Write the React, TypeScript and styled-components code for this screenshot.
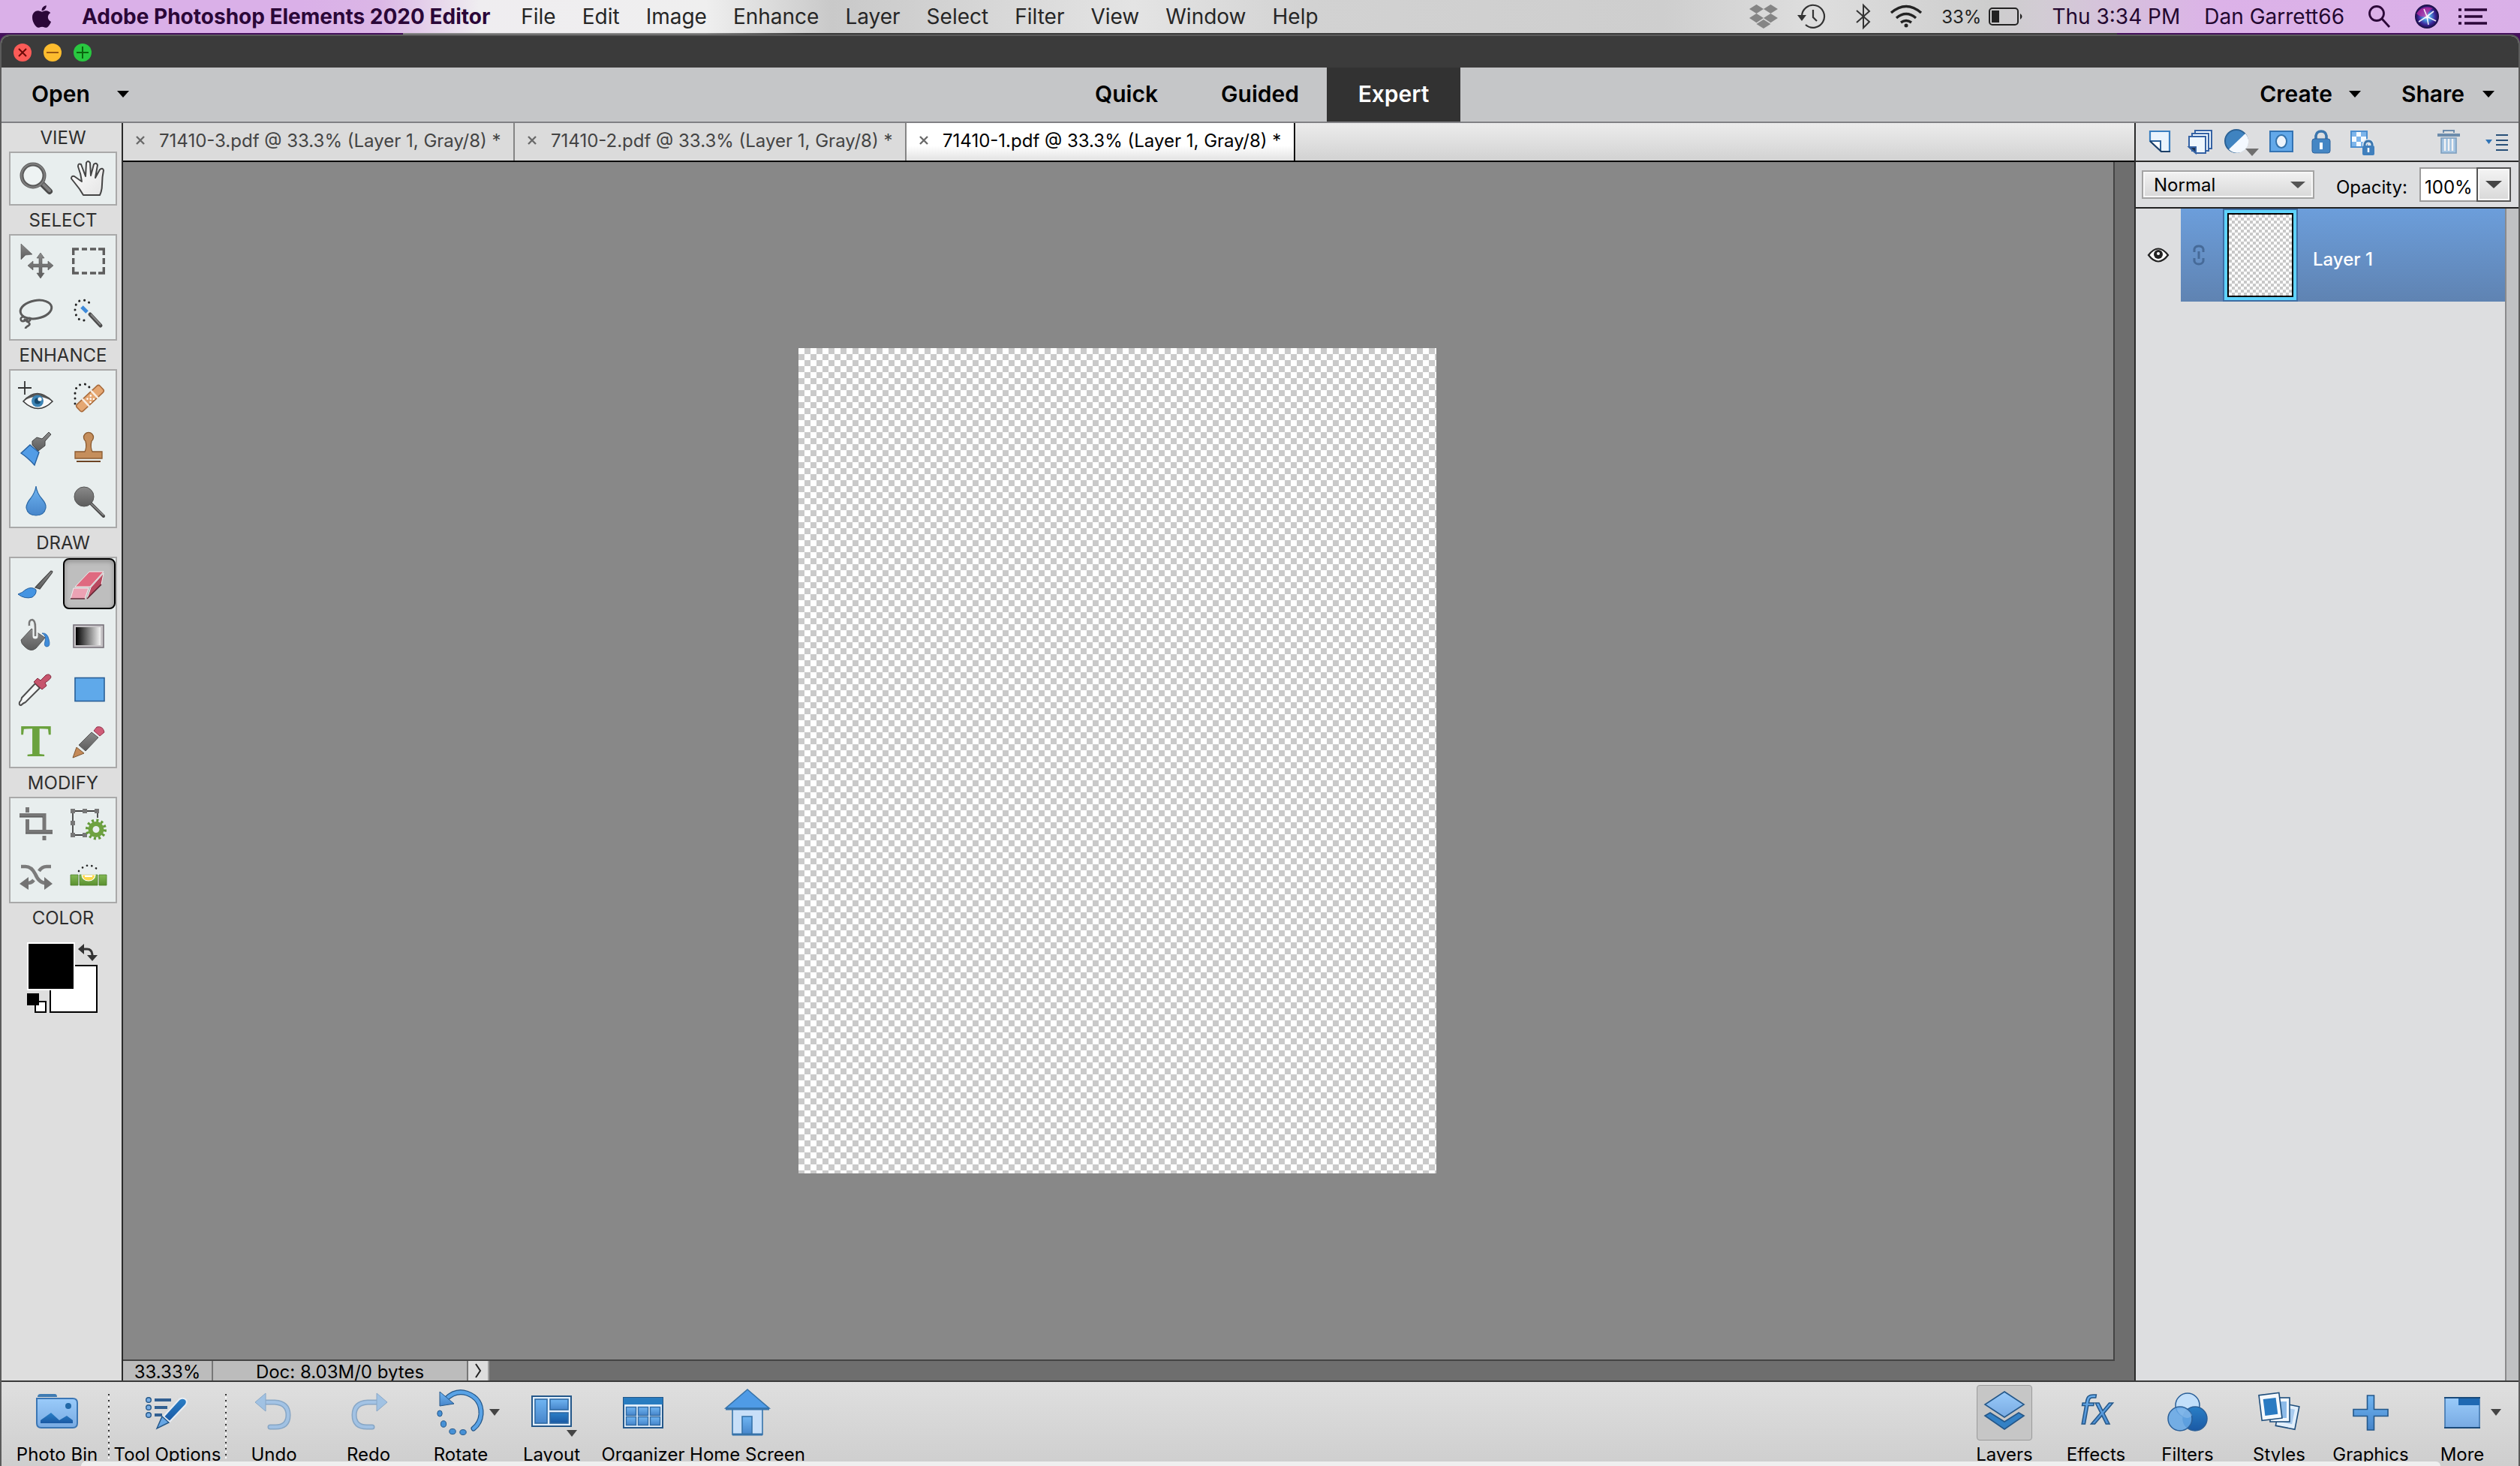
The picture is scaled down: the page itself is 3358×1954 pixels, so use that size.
import React from 'react';
import styled, { createGlobalStyle } from 'styled-components';
import { FaApple, FaDropbox } from 'react-icons/fa';

const GlobalStyle = createGlobalStyle`
  * { box-sizing: border-box; }
  body { margin: 0; overflow: hidden; font-family: Inter, Roboto, sans-serif; font-size: 24px; color: #000; }
  button, input, select { font: inherit; color: inherit; margin: 0; padding: 0; border: 0; background: none; border-radius: 0; }
  svg { display: block; flex: none; overflow: visible; }
`;

const Screen = styled.div`
  display: flex;
  flex-direction: column;
  height: 100vh;
  background: linear-gradient(90deg, #45105c 0 16%, #858585 16% 28%, #3c3c3c 32% 84%, #45105c 84%);
`;

/* ---------- System menu bar ---------- */

const MenuBar = styled.header`
  flex: none;
  display: flex;
  align-items: center;
  height: 44px;
  padding: 0 44px 0 42px;
  font-size: 28px;
  color: #202020;
  background: linear-gradient(90deg, #dab0e8 0 12%, #dbb6e6 15%, #efedf0 19%, #efefef 28%, #c9c9c9 33%, #cfcfcf 36%, #e4e4e4 45%, #d2d2d2 52%, #cecece 66%, #dedede 72%, #cdcdcd 79%, #d2ccd4 81%, #dcb2e8 88%, #dab0e8);
`;

const AppleMark = styled(FaApple)`
  width: 27px;
  height: 34px;
  color: #2b0738;
`;

const MenuNav = styled.nav`
  display: flex;
  gap: 35px;
  margin-left: 40px;
`;

const MenuItem = styled.button<{ $app?: boolean }>`
  margin-right: ${(p) => (p.$app ? 6 : 0)}px;
  font-weight: ${(p) => (p.$app ? 700 : 400)};
  color: ${(p) => (p.$app ? '#2b0738' : '#262626')};
  white-space: nowrap;
`;

const MenuStatus = styled.div`
  display: flex;
  align-items: center;
  gap: 32px;
  margin-left: auto;
  color: #230830;
  white-space: nowrap;
`;

const StatusIcons = styled.div`
  display: flex;
  align-items: center;
  gap: 26px;
`;

const Battery = styled.span`
  display: flex;
  align-items: center;
  gap: 10px;
  margin-right: 6px;
  font-size: 24px;
  color: #222;
`;

/* ---------- Window chrome ---------- */

const Window = styled.div`
  flex: 1;
  min-height: 0;
  display: flex;
  flex-direction: column;
  margin-top: 2px;
  border: 2px solid #5b5b5b;
  border-bottom: 0;
  border-radius: 12px 12px 0 0;
  overflow: hidden;
  background: #dedede;
`;

const TitleBar = styled.div`
  flex: none;
  display: flex;
  align-items: center;
  gap: 16px;
  height: 42px;
  padding: 2px 16px 0;
  background: #3b3b3b;
`;

const Light = styled.button<{ $color: string }>`
  display: grid;
  place-items: center;
  width: 24px;
  height: 24px;
  border-radius: 50%;
  background: ${(p) => p.$color};
`;

const ModeBar = styled.div`
  flex: none;
  display: grid;
  grid-template-columns: 1fr auto 1fr;
  height: 74px;
  border-bottom: 2px solid #808084;
  background: #c5c6c8;
  font-size: 30px;
  font-weight: 600;
`;

const ModeSide = styled.div<{ $end?: boolean }>`
  display: flex;
  align-items: center;
  gap: 54px;
  padding: 0 32px 2px 40px;
  justify-content: ${(p) => (p.$end ? 'flex-end' : 'flex-start')};
`;

const DropButton = styled.button<{ $gap: number }>`
  display: flex;
  align-items: center;
  gap: ${(p) => p.$gap}px;
`;

const Modes = styled.nav`
  display: flex;
`;

const Mode = styled.button<{ $active?: boolean }>`
  min-width: 178px;
  padding-bottom: 2px;
  color: ${(p) => (p.$active ? '#fff' : '#000')};
  background: ${(p) => (p.$active ? '#323232' : 'transparent')};
`;

const Body = styled.div`
  flex: 1;
  min-height: 0;
  display: flex;
`;

/* ---------- Tool column ---------- */

const Tools = styled.aside`
  flex: none;
  width: 162px;
  padding: 0 6px 0 10px;
  border-right: 2px solid #2a2a2a;
  background: #dedede;
`;

const ToolHeading = styled.h2`
  margin: 0;
  height: 38px;
  font-size: 24px;
  line-height: 40px;
  font-weight: 400;
  text-align: center;
  color: #2e2e2e;
`;

const ToolGroup = styled.div`
  display: grid;
  grid-template-columns: 1fr 1fr;
  grid-auto-rows: 68px;
  row-gap: 2px;
  border: 2px solid #a9a9a9;
  background: #e8eeee;
`;

const Tool = styled.button<{ $active?: boolean }>`
  display: grid;
  place-items: center;
  border-radius: 8px;
  border: ${(p) => (p.$active ? '2px solid #000' : '0')};
  background: ${(p) => (p.$active ? '#bebebe' : 'transparent')};
  box-shadow: ${(p) => (p.$active ? 'inset 0 2px 6px #8c8c8c' : 'none')};
`;

const Swatches = styled.div`
  display: grid;
  justify-content: center;
  margin-top: 14px;
`;

/* ---------- Document area ---------- */

const Documents = styled.main`
  flex: 1;
  min-width: 0;
  display: flex;
  flex-direction: column;
  background: #6e6e6e;
`;

const TabBar = styled.div`
  flex: none;
  display: flex;
  height: 52px;
  border-bottom: 2px solid #000;
  background: linear-gradient(#ececec, #d2d2d2);
`;

const Tab = styled.div<{ $active?: boolean }>`
  display: flex;
  align-items: center;
  gap: 18px;
  width: ${(p) => (p.$active ? 518 : 522)}px;
  padding: 0 16px 4px;
  border-right: 2px solid ${(p) => (p.$active ? '#111' : '#858585')};
  color: ${(p) => (p.$active ? '#000' : '#444')};
  background: ${(p) => (p.$active ? 'linear-gradient(#fff 60%, #e2e2e2)' : '#dbdbdb')};
  white-space: nowrap;
`;

const Viewport = styled.div`
  flex: 1;
  min-height: 0;
  display: flex;
  align-items: center;
  justify-content: center;
  margin-right: 26px;
  border-right: 2px solid #444;
  border-bottom: 2px solid #444;
  background: #888;
  padding-right: 2px;
`;

const Paper = styled.div`
  width: 850px;
  height: 1100px;
  background: repeating-conic-gradient(#cacaca 0 25%, #fff 0 50%) 0 0 / 16px 16px;
`;

const StatusBar = styled.div`
  flex: none;
  display: flex;
  height: 26px;
  line-height: 30px;
`;

const StatusCell = styled.div<{ $width: number }>`
  width: ${(p) => p.$width}px;
  text-align: center;
  border-right: 2px solid #777;
  background: #bcbcbc;
`;

const StatusMore = styled.button`
  display: grid;
  place-items: center;
  width: 28px;
  border-right: 2px solid #a0a0a0;
  background: #dedede;
`;

/* ---------- Layers panel ---------- */

const Panel = styled.aside`
  flex: none;
  display: flex;
  flex-direction: column;
  width: 512px;
  border-left: 2px solid #2a2a2a;
  background: #dddee0;
`;

const PanelActions = styled.div`
  flex: none;
  display: flex;
  align-items: center;
  height: 52px;
  padding: 2px 16px 2px 18px;
  border-bottom: 2px solid #2b2b2b;
`;

const ActionButton = styled.button<{ $gap: number }>`
  margin-right: ${(p) => p.$gap}px;
`;

const BlendRow = styled.div`
  flex: none;
  display: flex;
  align-items: center;
  height: 62px;
  padding: 0 10px 0 8px;
  border-bottom: 2px solid #222;
`;

const SelectBox = styled.div`
  position: relative;
  width: 230px;
`;

const BlendSelect = styled.select`
  appearance: none;
  width: 100%;
  height: 38px;
  padding: 0 0 0 14px;
  border: 2px solid #a4a4a4;
  box-shadow: inset 0 0 0 2px #f8f8f8;
  background: linear-gradient(#f2f2f2, #d8d8d8);
`;

const SelectArrow = styled.span`
  position: absolute;
  right: 12px;
  top: 15px;
  pointer-events: none;
`;

const OpacityLabel = styled.label`
  margin: 6px 16px 0 auto;
`;

const OpacityInput = styled.input`
  width: 76px;
  height: 46px;
  padding: 6px 0 0 5px;
  border: 2px solid #9b9b9b;
  border-right: 0;
  background: #fff;
`;

const OpacityDrop = styled.button`
  display: grid;
  place-items: center;
  width: 46px;
  height: 46px;
  border: 2px solid #555;
  box-shadow: inset 0 0 0 2px #fafafa;
  background: linear-gradient(#f4f4f4, #d8d8d8);
`;

const LayerArea = styled.div`
  flex: 1;
  display: flex;
  flex-direction: column;
  background: #c0c1c3;
`;

const LayerList = styled.div`
  flex: 1;
  margin-right: 16px;
  border-right: 2px solid #8a8a8c;
  background: #dddee0;
`;

const LayerRow = styled.div`
  display: flex;
  height: 124px;
`;

const Visibility = styled.button`
  display: grid;
  place-items: center;
  width: 60px;
`;

const LayerBody = styled.div`
  flex: 1;
  display: flex;
  align-items: center;
  padding-left: 16px;
  color: #fff;
  font-weight: 500;
  background: linear-gradient(#6c9edb, #5f83b2);
`;

const LayerName = styled.span`
  padding-top: 10px;
`;

const Thumb = styled.div`
  width: 100px;
  height: 124px;
  margin: 0 20px 0 24px;
  padding: 2px;
  background: #3f6da4;
`;

const ThumbInner = styled.div`
  height: 100%;
  border: 4px solid #5fd3fb;
  padding: 2px;
  background: #000;
`;

const ThumbPaper = styled.div`
  height: 100%;
  background: repeating-conic-gradient(#c8c8c8 0 25%, #fff 0 50%) 0 0 / 8px 8px;
`;

/* ---------- Bottom task bar ---------- */

const TaskBar = styled.footer`
  flex: none;
  position: relative;
  display: flex;
  height: 114px;
  padding: 0 14px 0 6px;
  border-top: 2px solid #3a3a3a;
  background: linear-gradient(#dfdfdf, #cecece);
`;

const Task = styled.button<{ $width: number }>`
  display: flex;
  flex-direction: column;
  align-items: center;
  width: ${(p) => p.$width}px;
  padding-top: 4px;
  white-space: nowrap;
  line-height: 30px;
`;

const TaskIcon = styled.span<{ $active?: boolean }>`
  position: relative;
  display: grid;
  place-items: center;
  width: 74px;
  height: 74px;
  margin-bottom: 4px;
  border: 1px solid ${(p) => (p.$active ? '#9a9a9a' : 'transparent')};
  border-radius: 4px;
  background: ${(p) => (p.$active ? '#c6c6c6' : 'transparent')};
`;

const Flyout = styled.span<{ $low?: boolean }>`
  position: absolute;
  left: ${(p) => (p.$low ? 56 : 74)}px;
  top: ${(p) => (p.$low ? 59 : 31)}px;
`;

const Divider = styled.span`
  width: 2px;
  height: 86px;
  margin-top: 16px;
  background: repeating-linear-gradient(#333 0 2px, transparent 2px 4px, #fff 4px 6px, transparent 6px 8px);
`;

const Spacer = styled.span`
  flex: 1;
`;

const DockEdge = styled.div`
  position: absolute;
  left: 106px;
  right: 104px;
  bottom: 0;
  height: 6px;
  border-radius: 6px 6px 0 0;
  background: #efefef;
`;

/* ---------- Drawings ---------- */

const Caret = ({ w = 16, h = 9, fill = '#000' }: { w?: number; h?: number; fill?: string }) => (
  <svg width={w} height={h} viewBox="0 0 16 9" preserveAspectRatio="none" aria-hidden="true">
    <path d="M0 0H16L8 9Z" fill={fill} />
  </svg>
);

const HiddenSvg = styled.svg`
  position: absolute;
`;

const Defs = () => (
  <HiddenSvg width="0" height="0" aria-hidden="true">
    <defs>
      <linearGradient id="blue" x1="0" y1="0" x2="0" y2="1"><stop offset="0" stopColor="#70b5f2" /><stop offset="1" stopColor="#4685ca" /></linearGradient>
      <linearGradient id="pale" x1="0" y1="0" x2="0" y2="1"><stop offset="0" stopColor="#9acbfa" /><stop offset="1" stopColor="#78aae2" /></linearGradient>
      <linearGradient id="deep" x1="0" y1="0" x2="0" y2="1"><stop offset="0" stopColor="#2a7fc6" /><stop offset="1" stopColor="#1a59a4" /></linearGradient>
      <linearGradient id="gray" x1="0" y1="0" x2="0" y2="1"><stop offset="0" stopColor="#8a8a8a" /><stop offset="1" stopColor="#5c5c5c" /></linearGradient>
      <linearGradient id="green" x1="0" y1="0" x2="0" y2="1"><stop offset="0" stopColor="#83b954" /><stop offset="1" stopColor="#5a9030" /></linearGradient>
      <linearGradient id="ramp"><stop offset="0" stopColor="#000" /><stop offset="1" stopColor="#f4f4f4" /></linearGradient>
      <linearGradient id="hand" x1="0" y1="0" x2="1" y2="1"><stop offset="0" stopColor="#fff" /><stop offset="1" stopColor="#e4e4e4" /></linearGradient>
      <radialGradient id="siri" cx=".5" cy=".5" r=".5"><stop offset="0" stopColor="#fff" /><stop offset=".3" stopColor="#4a9be0" /><stop offset=".7" stopColor="#3c2398" /><stop offset="1" stopColor="#140b3a" /></radialGradient>
    </defs>
  </HiddenSvg>
);

const toolArt: Record<string, React.ReactNode> = {
  Zoom: (
    <g fill="none"><path d="M30 30L41 41" stroke="#4b4b4b" strokeWidth="8" strokeLinecap="round" /><path d="M31 30L41 40" stroke="#808080" strokeWidth="4" strokeLinecap="round" />
      <circle cx="19" cy="20" r="15" fill="#eef3f3" stroke="#5a5a5a" strokeWidth="5" /><circle cx="19" cy="20" r="15.5" stroke="#808080" strokeWidth="2" /></g>
  ),
  Hand: (
    <path d="M16 46L11 38Q4 29 0 24Q0 20 4 21L14 28Q13 18 9 8Q9 3 13 5L19 21L20 3Q22-1 25 3L26 20L30 5Q33 2 35 6L32 23L38 12Q42 9 43 13Q41 22 41 32Q41 40 38 46Z" fill="url(#hand)" stroke="#454545" strokeWidth="2" strokeLinejoin="round" />
  ),
  Move: (
    <g fill="url(#gray)" stroke="#555" strokeWidth=".6"><path d="M3 1L18 15L9 16L3 22Z" />
      <path d="M29 13L34 20H31V28H39V24L46 30L39 36V32H31V40H34L29 47L24 40H27V32H19V36L12 30L19 24V28H27V20H24Z" /></g>
  ),
  Marquee: (
    <g fill="none" stroke="#5d5d5d" strokeWidth="3.4"><path d="M2.700 16V8H10M36 8H43.300V16M43.300 32V40H36M10 40H2.700V32M14 8H21M25 8H33M14 40H21M25 40H33M2.700 20V28M43.300 20V28" /></g>
  ),
  Lasso: (
    <g fill="none" stroke="#5b5b5b" strokeWidth="3"><ellipse cx="23" cy="18.500" rx="21" ry="12" transform="rotate(-10 23 18.5)" /><path d="M7 28Q1 29 3 33Q6 36 12 31Q17 28 15 33Q12 36 7 31M10 34Q17 37 13 40Q9 42 9 44" strokeWidth="2.600" /></g>
  ),
  'Quick Selection': (
    <g><path d="M17 33Q7 34 5 20Q5 7 15 6Q23 6 27 14" fill="none" stroke="#222" strokeWidth="3" strokeLinecap="round" strokeDasharray=".1 6.800" />
      <path d="M14 15L21 22" stroke="#3d8ada" strokeWidth="5" /><path d="M25 25L39 40" stroke="#4a4a4a" strokeWidth="5" strokeLinecap="round" /><path d="M26 25L39 39" stroke="#858585" strokeWidth="2" /></g>
  ),
  'Eye Correction': (
    <g><path d="M-1 13H17M8 4V22" stroke="#333" strokeWidth="1.800" /><path d="M6 31Q24 10 45 31Q26 50 6 31Z" fill="#f8f8f8" stroke="#3b3b3b" strokeWidth="1.600" /><path d="M6 31Q24 10 45 31Q24 18 6 31Z" fill="#555" />
      <circle cx="25" cy="30.500" r="8" fill="#3c83b4" /><circle cx="25" cy="30.500" r="4" fill="#16486c" /><circle cx="28" cy="28" r="2.600" fill="#fff" /></g>
  ),
  'Spot Healing': (
    <g><path d="M5 34V18Q7 8 17 8Q22 8 25 14" fill="none" stroke="#222" strokeWidth="3" strokeLinecap="round" strokeDasharray=".1 6.800" />
      <g transform="rotate(-43 25 27)"><rect x="4" y="21" width="42" height="12" rx="3" fill="#e5a772" stroke="#a86b3c" strokeWidth="1.500" /><path d="M17 20V34M33 20V34" stroke="#f7ece2" strokeWidth="2.500" /><g fill="#fff"><circle cx="22" cy="25" r="1.300" /><circle cx="25" cy="28" r="1.300" /><circle cx="28" cy="25" r="1.300" /><circle cx="22" cy="31" r="1.300" /><circle cx="28" cy="31" r="1.300" /></g></g></g>
  ),
  'Smart Brush': (
    <g><path d="M40 2L43 5L35 14L35 20L26 27L18 19V14L24 9L31 11Z" fill="url(#gray)" stroke="#444" strokeWidth="1" /><path d="M3 30L15 19L27 29L21 46Q12 36 3 30Z" fill="#529ce6" stroke="#245f9f" strokeWidth="1.400" /></g>
  ),
  'Clone Stamp': (
    <g fill="#c58e5c" stroke="#8a5a30" strokeWidth="1.300"><path d="M5 37V28H18Q21 22 19 14A6.500 6.500 0 1 1 27 14Q25 22 28 28H41V37Z" /><path d="M7 41H39" strokeWidth="2" stroke="#6d4423" /></g>
  ),
  Blur: <path d="M23 4Q24 13 31 21Q37 28 36 33Q34 43 23 43Q12 43 10 33Q10 27 16 20Q22 12 23 4Z" fill="url(#blue)" stroke="#2a68a6" strokeWidth="1.200" />,
  Sponge: (
    <g><path d="M26 27L43 44" stroke="#484848" strokeWidth="4" strokeLinecap="round" /><path d="M26 27L43 43" stroke="#909090" strokeWidth="1.500" /><circle cx="17" cy="18" r="13" fill="url(#gray)" stroke="#555" /></g>
  ),
  Brush: (
    <g><path d="M43 7Q46 7 44 10L28 31L22 29Q32 18 43 7Z" fill="url(#gray)" stroke="#444" strokeWidth="1.200" /><path d="M-1 38Q5 36 9 32Q17 27 23 32Q24 38 18 42Q8 45-1 38Z" fill="#4494e2" stroke="#235d9c" strokeWidth="1" /></g>
  ),
  Eraser: (
    <g stroke="#eee" strokeWidth="1"><path d="M5 28L24 8H43L25 28Z" fill="#df6a80" /><path d="M3 30H23L18 44H-1Z" fill="#eca2b4" /><path d="M26 29L43 10L40 25L21 44Z" fill="#b84a5f" /><path d="M-1 44H18M21 44L40 25" stroke="#5b2230" strokeWidth="1.500" /></g>
  ),
  'Paint Bucket': (
    <g><path d="M3 29L17 14L35 26L23 40Q16 46 8 38Q3 34 3 29Z" fill="url(#gray)" stroke="#555" strokeWidth="1" /><path d="M22 12V24" fill="none" stroke="#eef2f2" strokeWidth="7" strokeLinecap="round" /><path d="M14 10Q13 2 18 2Q22 3 22 12V24" fill="none" stroke="#777" strokeWidth="2.600" /><path d="M31 20Q38 19 40 28Q43 38 37 38Q33 37 35 31Q37 23 31 20Z" fill="#3f8cda" stroke="#2461a3" strokeWidth=".8" /></g>
  ),
  Gradient: (
    <g><rect x="3" y="9" width="40" height="30" fill="#c7c4c7" stroke="#77727a" strokeWidth="1.600" /><rect x="6" y="12" width="33" height="24" fill="url(#ramp)" /></g>
  ),
  'Color Picker': (
    <g><path d="M22 17L28 23L9 42Q6 43 3 46Q0 46 1 42Q4 39 4 36Z" fill="#f3f6f6" stroke="#4d4d4d" strokeWidth="2" /><path d="M20 15L25 10L29 13L36 6Q41 3 43 8Q43 11 35 16L37 20L31 25Z" fill="#c6546c" stroke="#83283d" strokeWidth="1" /></g>
  ),
  Shape: <rect x="5" y="9.500" width="39" height="31" fill="#5fa9ea" stroke="#285f98" strokeWidth="1.600" />,
  Type: <text x="23" y="44" textAnchor="middle" fontFamily="Liberation Serif, serif" fontWeight="700" fontSize="62" fill="#6ba23e">T</text>,
  Pencil: (
    <g><path d="M2 46L7 32L17 40Z" fill="#c48a58" stroke="#7c5532" strokeWidth="1" /><path d="M10 29L27 12L36 19L19 37Z" fill="url(#gray)" stroke="#555" /><path d="M30 10L34 5Q42 3 44 12L38 17Z" fill="#cf5d78" stroke="#93324a" strokeWidth="1" /></g>
  ),
  Crop: (
    <g fill="none" stroke="#777" strokeWidth="5"><path d="M1 12.500H34V32" /><path d="M11.500 2V9M11.500 18V34.500H45M34 40V46" /><path d="M1 15H32M9 37H45" stroke="#444" strokeWidth="1" /></g>
  ),
  Recompose: (
    <g><path d="M2 7H35V16M2 7V39H20" fill="none" stroke="#444" strokeWidth="1.800" /><g fill="#777"><path d="M-1 4H5V10H-1ZM15 4H21V10H15ZM31 4H37V10H31ZM-1 20H5V26H-1ZM-1 36H5V42H-1ZM15 36H21V42H15Z" /></g>
      <circle cx="33" cy="31.500" r="12" fill="none" stroke="#639a38" strokeWidth="4" strokeDasharray="3 3.280" /><circle cx="33" cy="31.500" r="7.500" fill="#e8eeee" stroke="#6ea240" strokeWidth="6" /></g>
  ),
  'Content-Aware Move': (
    <g fill="none" stroke="#7b7b7b" strokeWidth="4.600"><path d="M3 11H9Q17 11 22 21Q27 33 36 33" /><path d="M43 11H37Q31 11 27 17M20 29Q17 33 12 33" /><path d="M34 25L45 34L34 42ZM13 25L1 34L13 42Z" fill="#737373" stroke="none" /></g>
  ),
  Straighten: (
    <g><path d="M10 17Q23 2 37 17" fill="none" stroke="#222" strokeWidth="2.600" strokeLinecap="round" strokeDasharray=".1 6.500" /><path d="M-1 22H9V36H-1ZM11 22H35V36H11ZM37 22H47V36H37Z" fill="url(#green)" stroke="#4b7d28" strokeWidth=".8" /><path d="M14 22H32Q31 30 23 30Q15 30 14 22Z" fill="#fbd84b" stroke="#fff" strokeWidth="1.200" /><path d="M18 24H28" stroke="#fff" strokeWidth="2" /></g>
  ),
};

const groups: [string, string[]][] = [
  ['VIEW', ['Zoom', 'Hand']],
  ['SELECT', ['Move', 'Marquee', 'Lasso', 'Quick Selection']],
  ['ENHANCE', ['Eye Correction', 'Spot Healing', 'Smart Brush', 'Clone Stamp', 'Blur', 'Sponge']],
  ['DRAW', ['Brush', 'Eraser', 'Paint Bucket', 'Gradient', 'Color Picker', 'Shape', 'Type', 'Pencil']],
  ['MODIFY', ['Crop', 'Recompose', 'Content-Aware Move', 'Straighten']],
];

const edge = '#245789';

const taskArt: Record<string, React.ReactNode> = {
  'Photo Bin': (
    <g><path d="M6 11Q6 7 10 7H29Q32 7 32 11Z" fill="#3f7bb2" /><path d="M5 13H53Q59 13 59 19V46Q59 52 53 52H11Q5 52 5 46Z" fill="url(#pale)" stroke="#3b76b4" strokeWidth="2" /><path d="M10 46V42L24 32L35 42L45 36L53 42V46Z" fill="url(#deep)" /><circle cx="47" cy="23" r="4" fill="#2269a8" /></g>
  ),
  'Tool Options': (
    <g><g fill="#78aee5" stroke={edge} strokeWidth="1.400"><circle cx="7" cy="15" r="3.300" /><circle cx="7" cy="25" r="3.300" /><circle cx="7" cy="35" r="3.300" /></g><path d="M15 15H37M15 25H32M15 35H25" stroke="#315f91" strokeWidth="4" /><path d="M48 14Q54 11 57 15Q59 18 56 22L35 44L27 37Z" fill="url(#deep)" stroke="#e9eef4" strokeWidth="2" /><path d="M25 37L34 45L18 53Z" fill="#67a6e4" stroke={edge} strokeWidth="1.400" /></g>
  ),
  Undo: <g opacity=".55"><path d="M20 18H33Q51 19 51 35Q51 51 34 51H27" fill="none" stroke="#467fb8" strokeWidth="7" strokeLinecap="round" /><path d="M20 18H33Q51 19 51 35Q51 51 34 51H27" fill="none" stroke="#76b1ee" strokeWidth="4" strokeLinecap="round" /><path d="M7 18L21 6V30Z" fill="#72aeea" stroke="#467fb8" /></g>,
  Redo: <g opacity=".55"><path d="M44 18H31Q13 19 13 35Q13 51 30 51H37" fill="none" stroke="#467fb8" strokeWidth="7" strokeLinecap="round" /><path d="M44 18H31Q13 19 13 35Q13 51 30 51H37" fill="none" stroke="#76b1ee" strokeWidth="4" strokeLinecap="round" /><path d="M57 18L43 6V30Z" fill="#72aeea" stroke="#467fb8" /></g>,
  Rotate: (
    <g><path d="M12 14Q25 1 40 6Q60 13 59 34Q58 46 49 53" fill="none" stroke={edge} strokeWidth="7" strokeLinecap="round" /><path d="M12 14Q25 1 40 6Q60 13 59 34Q58 46 49 53" fill="none" stroke="#5aa3e6" strokeWidth="4.500" strokeLinecap="round" /><path d="M4 4V23L23 20Z" fill="url(#blue)" stroke={edge} /><g fill="#4791d6" stroke={edge}><ellipse cx="4" cy="33" rx="3.200" ry="4" /><ellipse cx="9" cy="47" rx="3.600" ry="4.200" /><ellipse cx="21" cy="57" rx="4.200" ry="3.600" /><ellipse cx="35" cy="58" rx="4.200" ry="3.400" /></g></g>
  ),
  Layout: (
    <g stroke="#2f6aa4" strokeWidth="1.600"><rect x="6" y="10" width="52" height="40" fill="#e2effb" stroke={edge} strokeWidth="2" /><rect x="10" y="14" width="16" height="32" fill="url(#blue)" /><rect x="30" y="14" width="24" height="14" fill="url(#blue)" /><rect x="30" y="32" width="24" height="14" fill="url(#deep)" /></g>
  ),
  Organizer: (
    <g stroke="#2f6aa4" strokeWidth="1.400"><rect x="6" y="12" width="52" height="40" fill="#e2effb" stroke={edge} strokeWidth="2" /><rect x="6" y="12" width="52" height="9" fill="#287cc0" stroke="none" />{[9.5, 25.5, 41.5].map((x) => [24.5, 37.5].map((y) => <rect key={x + '-' + y} x={x} y={y} width="13" height="11" fill="url(#blue)" />))}</g>
  ),
  'Home Screen': (
    <g stroke="#3673aa" strokeWidth="1.600"><rect x="12" y="27" width="40" height="34" fill="#c8dff8" /><path d="M32 1L61 26H3Z" fill="#4f9be6" /><rect x="25" y="37" width="13" height="24" fill="url(#blue)" /><path d="M3 27H61M12 61H52" strokeWidth="3" /></g>
  ),
  Layers: <g stroke={edge} strokeWidth="1.600"><path d="M32 4L58 21L32 38L6 21Z" fill="url(#pale)" /><path d="M6 36L13 32L32 44L51 32L58 36L32 54Z" fill="#3481c5" /></g>,
  Effects: <text x="32" y="47" textAnchor="middle" fontFamily="DejaVu Sans Condensed, Open Sans, sans-serif" fontStyle="italic" fontSize="52" fill="url(#blue)" stroke={edge} strokeWidth="1.500">fx</text>,
  Filters: (
    <g stroke="#2a5f98" strokeWidth="1.500"><circle cx="32" cy="22" r="16" fill="#c2dffa" /><circle cx="42" cy="40" r="16" fill="url(#deep)" /><circle cx="22" cy="40" r="16" fill="#65a7e6" fillOpacity=".88" /><path d="M18 28Q31 23 38 35Q36 39 31 39Q21 37 18 28Z" fill="#8bbbe9" stroke="none" opacity=".6" /></g>
  ),
  Styles: (
    <g stroke="#1f4e7c" strokeWidth="1.600"><rect x="30" y="21" width="26" height="31" fill="#e2effb" transform="rotate(11 43 37)" /><rect x="34" y="26" width="17" height="20" fill="#a8cbef" stroke="none" transform="rotate(11 43 37)" /><rect x="20" y="12" width="26" height="32" fill="#f2f8fe" /><rect x="25" y="17" width="17" height="22" fill="#8dbbe9" stroke="none" /><rect x="7" y="7" width="27" height="34" fill="#f5f9fd" transform="rotate(-7 20 24)" /><rect x="12" y="13" width="17" height="22" fill="#297ac2" stroke="none" transform="rotate(-7 20 24)" /></g>
  ),
  Graphics: <path d="M27.500 9H36.500V27.500H55V36.500H36.500V55H27.500V36.500H9V27.500H27.500Z" fill="url(#blue)" stroke={edge} strokeWidth="1.600" />,
  More: <g><rect x="9" y="12" width="46" height="40" fill="url(#pale)" stroke="#3f76b0" strokeWidth="1.600" /><path d="M27 12H55V22H27Z" fill="#1f69b3" /><path d="M8 12H56M8 52H56" stroke="#1b4a7a" strokeWidth="2" /></g>,
};

const TaskItem = ({ name, width, active, flyout }: { name: string; width: number; active?: boolean; flyout?: 'side' | 'low' }) => (
  <Task $width={width}>
    <TaskIcon $active={active}>
      <svg width="64" height="64" viewBox="0 0 64 64" aria-hidden="true">{taskArt[name]}</svg>
      {flyout && <Flyout $low={flyout === 'low'}><Caret w={14} fill="#444" /></Flyout>}
    </TaskIcon>
    {name}
  </Task>
);

const Art = ({ w, h = 34, children }: { w: number; h?: number; children: React.ReactNode }) => (
  <svg width={w} height={h} viewBox={`0 0 ${w} ${h}`} aria-hidden="true">{children}</svg>
);

const panelActions: [string, number, number, React.ReactNode][] = [
  ['New layer', 28, 24, <g key="n"><path d="M1 3H27V30H16L1 16Z" fill="#eaf4fd" stroke="#3a7fc0" strokeWidth="2.200" /><path d="M1 16H15V30" fill="#fff" stroke="#2b6099" strokeWidth="2" /><path d="M1 16L16 30H28" fill="none" stroke="#1d3e66" strokeWidth="2" /></g>],
  ['New group', 32, 16, <g key="g" fill="#eef6fe" stroke="#3562a4" strokeWidth="2"><path d="M9 2H31V26H9Z" /><path d="M5 6H27V29H5Z" /><path d="M1 10H23V32H10L1 24Z" /><path d="M1 24H10V32Z" fill="#1d3454" /></g>],
  ['Adjustment layer', 46, 14, <g key="a"><circle cx="16" cy="16" r="15" fill="#3f83c0" stroke="#2c6295" strokeWidth="2" /><path d="M28 6A15 15 0 0 1 6 27Z" fill="#f4f9ff" /><path d="M28 26H46L37 36Z" fill="#6f6f6f" /></g>],
  ['Layer mask', 32, 24, <g key="m"><rect x="1" y="3" width="30" height="27" fill="#63a9ea" stroke="#3373b3" strokeWidth="2" /><ellipse cx="16" cy="16.500" rx="7" ry="8.500" fill="#eef4fb" stroke="#3573ac" strokeWidth="2" /></g>],
  ['Lock all', 26, 26, <g key="l"><path d="M6 14V9Q7 3 13 3Q19 3 20 9V14" fill="none" stroke="#3a75ad" strokeWidth="3.600" /><rect x="1" y="13" width="24" height="19" rx="3" fill="#4586c4" stroke="#2d629b" /><path d="M13 18V27" stroke="#fff" strokeWidth="4" /></g>],
  ['Lock transparency', 32, 84, <g key="t"><rect x="1" y="3" width="21" height="21" fill="#f5faff" stroke="#4d8fd0" strokeWidth="2" /><path d="M2 4H8V10H2ZM14 4H21V10H14ZM8 10H14V17H8ZM2 17H8V23H2ZM14 17H21V23H14Z" fill="#7db5eb" /><path d="M19 24V20Q20 16 24 16Q28 16 29 20V24" fill="none" stroke="#dde6ef" strokeWidth="6" /><path d="M19 24V20Q20 16 24 16Q28 16 29 20V24" fill="none" stroke="#3a75ad" strokeWidth="3" /><rect x="16" y="22" width="16" height="13" rx="2" fill="#3f7fbd" /><path d="M24 25V31" stroke="#fff" strokeWidth="2.500" /></g>],
  ['Delete layer', 30, 34, <g key="d" opacity=".65"><path d="M0 8H30" stroke="#316191" strokeWidth="4" /><path d="M8 5V2H22V5" fill="none" stroke="#316191" strokeWidth="2" /><path d="M5 12H25V32H5Z" fill="#85b5e2" stroke="#4b7dac" strokeWidth="1.600" /><path d="M10 13V29M15 13V29M20 13V29" stroke="#fff" strokeWidth="2.400" /></g>],
  ['Panel menu', 30, 0, <g key="p"><path d="M0 14H9L4.500 20Z" fill="#2f74b6" /><path d="M14 8H30M14 15H30M14 21H30M14 28H30" stroke="#274f78" strokeWidth="2" /></g>],
];

const tabs = ['71410-3.pdf', '71410-2.pdf', '71410-1.pdf'];

export default function App() {
  return (
    <Screen>
      <GlobalStyle />
      <Defs />
      <MenuBar>
        <AppleMark />
        <MenuNav>
          <MenuItem $app>Adobe Photoshop Elements 2020 Editor</MenuItem>
          {['File', 'Edit', 'Image', 'Enhance', 'Layer', 'Select', 'Filter', 'View', 'Window', 'Help'].map((m) => <MenuItem key={m}>{m}</MenuItem>)}
        </MenuNav>
        <MenuStatus>
          <StatusIcons>
            <FaDropbox size={38} color="#858585" />
            <svg width="38" height="34" viewBox="0 0 38 34" fill="none" stroke="#333" strokeWidth="2.200" aria-label="Time Machine"><path d="M6 17A15 15 0 1 1 11 28" /><path d="M21 8V18L26 23" /><path d="M0 15H12L6 23Z" fill="#333" stroke="none" /></svg>
            <svg width="34" height="32" viewBox="-14 0 34 32" fill="none" stroke="#333" strokeWidth="2" aria-label="Bluetooth"><path d="M1 8L18 23L10 31V1L18 9L1 24" /></svg>
            <svg width="42" height="30" viewBox="0 0 42 30" fill="none" stroke="#222" strokeWidth="3.400" aria-label="Wi-Fi"><path d="M1 10Q21-7 41 10M8 17Q21 6 34 17M14 23Q21 18 28 23" /><circle cx="21" cy="27" r="2.500" fill="#222" stroke="none" /></svg>
            <Battery>33%
              <svg width="46" height="24" viewBox="0 0 46 24" aria-label="Battery"><rect x="1" y="1" width="38" height="22" rx="4" fill="none" stroke="#222" strokeWidth="2" /><rect x="4" y="4" width="10" height="16" fill="#222" /><path d="M42 8Q47 12 42 16Z" fill="#222" /></svg>
            </Battery>
          </StatusIcons>
          <span>Thu 3:34 PM</span>
          <span>Dan Garrett66</span>
          <svg width="30" height="30" viewBox="0 0 30 30" fill="none" stroke="#2b0738" strokeWidth="2.800" aria-label="Search"><circle cx="11" cy="11" r="9.500" /><path d="M18 18L28 29" /></svg>
          <StatusIcons>
            <svg width="32" height="32" viewBox="0 0 32 32" aria-label="Siri"><circle cx="16" cy="16" r="16" fill="url(#siri)" /><path d="M2 12Q10 0 24 5Q18 8 16 16Q8 18 2 12Z" fill="#c52aa0" opacity=".7" /><path d="M5 23L16 16L28 22M12 6L16 16L25 9M16 16L18 27" stroke="#fff" strokeWidth="1.600" opacity=".9" fill="none" /></svg>
            <svg width="38" height="22" viewBox="0 0 38 22" stroke="#2b0738" strokeWidth="3.600" aria-label="Notifications"><path d="M0 2H4M8 2H38M0 11H4M8 11H32M0 20H4M8 20H38" /></svg>
          </StatusIcons>
        </MenuStatus>
      </MenuBar>

      <Window>
        <TitleBar>
          <Light $color="#fc5b57" aria-label="Close"><svg width="12" height="12" viewBox="0 0 12 12" stroke="#6d0a08" strokeWidth="2"><path d="M1 1L11 11M11 1L1 11" /></svg></Light>
          <Light $color="#fdbc2e" aria-label="Minimize"><svg width="16" height="12" viewBox="0 0 16 12" stroke="#985712" strokeWidth="2"><path d="M0 6H16" /></svg></Light>
          <Light $color="#29c840" aria-label="Maximize"><svg width="16" height="16" viewBox="0 0 16 16" stroke="#0b650f" strokeWidth="2"><path d="M0 8H16M8 0V16" /></svg></Light>
        </TitleBar>

        <ModeBar>
          <ModeSide><DropButton $gap={36}>Open<Caret /></DropButton></ModeSide>
          <Modes><Mode>Quick</Mode><Mode>Guided</Mode><Mode $active>Expert</Mode></Modes>
          <ModeSide $end><DropButton $gap={22}>Create<Caret /></DropButton><DropButton $gap={24}>Share<Caret /></DropButton></ModeSide>
        </ModeBar>

        <Body>
          <Tools>
            {groups.map(([title, names]) => (
              <section key={title}>
                <ToolHeading>{title}</ToolHeading>
                <ToolGroup>
                  {names.map((n) => (
                    <Tool key={n} $active={n === 'Eraser'} aria-label={n}>
                      <svg width="48" height="48" viewBox="0 0 48 48" aria-hidden="true">{toolArt[n]}</svg>
                    </Tool>
                  ))}
                </ToolGroup>
              </section>
            ))}
            <ToolHeading>COLOR</ToolHeading>
            <Swatches>
              <svg width="96" height="96" viewBox="0 0 96 96" aria-label="Foreground and background colors">
                <rect x="31" y="31" width="62" height="62" fill="#fff" stroke="#000" strokeWidth="2" />
                <rect x="1" y="1" width="62" height="62" fill="#000" stroke="#fff" strokeWidth="2" />
                <rect x="11" y="79" width="14" height="14" fill="#fff" stroke="#000" strokeWidth="2" />
                <rect x="0" y="68" width="16" height="16" />
                <path d="M74 9H80Q87 9 87 18" fill="none" stroke="#333" strokeWidth="3" /><path d="M68 9L76 2V16ZM80 17H94L87 25Z" fill="#333" />
              </svg>
            </Swatches>
          </Tools>

          <Documents>
            <TabBar>
              {tabs.map((t, i) => (
                <Tab key={t} $active={i === 2}>
                  <button aria-label={`Close ${t}`}><svg width="14" height="14" viewBox="0 0 14 14" stroke="#6a6a6a" strokeWidth="2.400"><path d="M2 2L12 12M12 2L2 12" /></svg></button>
                  <button>{t} @ 33.3% (Layer 1, Gray/8) *</button>
                </Tab>
              ))}
            </TabBar>
            <Viewport><Paper /></Viewport>
            <StatusBar>
              <StatusCell $width={120}>33.33%</StatusCell>
              <StatusCell $width={340}>Doc: 8.03M/0 bytes</StatusCell>
              <StatusMore aria-label="Status options"><svg width="8" height="18" viewBox="0 0 8 18" fill="none" stroke="#222" strokeWidth="2"><path d="M1 0L7 9L1 18" /></svg></StatusMore>
            </StatusBar>
          </Documents>

          <Panel>
            <PanelActions>
              {panelActions.map(([label, w, gap, art]) => <ActionButton key={label} $gap={gap} aria-label={label}><Art w={w}>{art}</Art></ActionButton>)}
            </PanelActions>
            <BlendRow>
              <SelectBox>
                <BlendSelect aria-label="Blend mode" defaultValue="Normal"><option>Normal</option></BlendSelect>
                <SelectArrow><Caret w={20} h={9} fill="#555" /></SelectArrow>
              </SelectBox>
              <OpacityLabel htmlFor="opacity">Opacity:</OpacityLabel>
              <OpacityInput id="opacity" defaultValue="100%" />
              <OpacityDrop aria-label="Opacity slider"><Caret w={22} h={10} fill="#444" /></OpacityDrop>
            </BlendRow>
            <LayerArea>
              <LayerList>
                <LayerRow>
                  <Visibility aria-label="Toggle layer visibility">
                    <svg width="28" height="20" viewBox="0 0 28 20"><path d="M1 10Q14-7 27 10Q14 27 1 10Z" fill="#fff" stroke="#222" strokeWidth="2.200" /><circle cx="14" cy="9" r="6" fill="#222" /><circle cx="14" cy="8" r="2" fill="#fff" /></svg>
                  </Visibility>
                  <LayerBody>
                    <svg width="16" height="28" viewBox="0 0 16 28" fill="none" stroke="#466a98" strokeWidth="3" aria-hidden="true"><path d="M2 10V6Q3 2 8 2Q13 2 14 6V10M2 18V22Q3 26 8 26Q13 26 14 22V18M8 9V19" /></svg>
                    <Thumb><ThumbInner><ThumbPaper /></ThumbInner></Thumb>
                    <LayerName>Layer 1</LayerName>
                  </LayerBody>
                </LayerRow>
              </LayerList>
            </LayerArea>
          </Panel>
        </Body>

        <TaskBar>
          <TaskItem name="Photo Bin" width={136} />
          <Divider />
          <TaskItem name="Tool Options" width={154} />
          <Divider />
          <TaskItem name="Undo" width={126} />
          <TaskItem name="Redo" width={126} />
          <TaskItem name="Rotate" width={120} flyout="side" />
          <TaskItem name="Layout" width={122} flyout="low" />
          <TaskItem name="Organizer" width={122} />
          <TaskItem name="Home Screen" width={156} />
          <Spacer />
          <TaskItem name="Layers" width={122} active />
          <TaskItem name="Effects" width={122} />
          <TaskItem name="Filters" width={122} />
          <TaskItem name="Styles" width={122} />
          <TaskItem name="Graphics" width={122} />
          <TaskItem name="More" width={122} flyout="side" />
          <DockEdge />
        </TaskBar>
      </Window>
    </Screen>
  );
}
